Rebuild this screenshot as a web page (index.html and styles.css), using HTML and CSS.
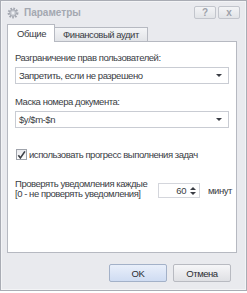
FILE: index.html
```html
<!DOCTYPE html>
<html lang="ru">
<head>
  <meta charset="UTF-8" />
  <title>Параметры</title>
  <link rel="stylesheet" href="styles.css">
</head>
<body>

  <div class="window">
    <div class="titlebar">
      <svg class="title-icon" width="12" height="12" viewBox="0 0 12 12">
        <circle cx="6" cy="6" r="4.2" fill="none" stroke="#a3a7b0" stroke-width="2.4" stroke-dasharray="1.6 1.2"/>
        <circle cx="6" cy="6" r="3.3" fill="#c9ccd3" stroke="#9ea2ab" stroke-width="0.8"/>
        <circle cx="6" cy="6" r="1.4" fill="#eceef2"/>
      </svg>
      <span class="title">Параметры</span>
      <div class="title-buttons">
        <button class="tbtn">?</button>
        <button class="tbtn">x</button>
      </div>
    </div>

    <div class="tabs">
      <div class="tab active">Общие</div>
      <div class="tab">Финансовый аудит</div>
    </div>

    <div class="panel">
      <div class="field-label">Разграничение прав пользователей:</div>
      <div class="combo">
        <span>Запретить, если не разрешено</span>
        <span class="arrow"></span>
      </div>

      <div class="field-label second">Маска номера документа:</div>
      <div class="combo">
        <span>$y/$m-$n</span>
        <span class="arrow"></span>
      </div>

      <div class="check-row">
        <span class="checkbox">
          <svg width="10" height="10" viewBox="0 0 10 10">
            <path d="M1.5 5.2 L3.8 8.3 L8.8 1" fill="none" stroke="#3c3f46" stroke-width="1.8"/>
          </svg>
        </span>
        <span>использовать прогресс выполнения задач</span>
      </div>

      <div class="notify-row">
        <div class="notify-text">
          <div>Проверять уведомления каждые</div>
          <div>[0 - не проверять уведомления]</div>
        </div>
        <div class="spin">
          <span class="spin-value">60</span>
          <span class="spin-arrows">
            <span class="up"></span>
            <span class="down"></span>
          </span>
        </div>
        <span class="unit">минут</span>
      </div>
    </div>

    <div class="footer">
      <button class="btn ok">OK</button>
      <button class="btn">Отмена</button>
    </div>
  </div>

</body>
</html>
```

FILE: styles.css
```css
body {
  margin: 0;
  background: #ffffff;
  font-family: 'Liberation Sans', Arial, sans-serif;
  font-size: 9.5px;
  letter-spacing: -0.45px;
  color: #3a3d44;
  white-space: nowrap;
}

.window {
  width: 245px;
  height: 289px;
  border: 1px solid #a9acb4;
  background: #e9eaee;
  box-shadow: inset 0 0 0 1px #f3f4f6;
  display: flex;
  flex-direction: column;
}

.titlebar {
  height: 23px;
  display: flex;
  align-items: center;
  padding: 0 6px 0 6px;
}

.title-icon {
  margin-right: 5px;
}

.title {
  font-weight: bold;
  font-size: 10px;
  letter-spacing: 0;
  color: #a4a8b1;
  flex: 1;
}

.title-buttons {
  display: flex;
  gap: 2px;
}

.tbtn {
  width: 22px;
  height: 13px;
  padding: 0;
  border: 1px solid #c2c5cc;
  border-radius: 2px;
  background: linear-gradient(#f3f4f6, #e1e3e7);
  color: #9ea2aa;
  font-family: 'Liberation Sans', Arial, sans-serif;
  font-size: 10px;
  font-weight: bold;
  line-height: 11px;
}

.tabs {
  display: flex;
  align-items: flex-end;
  padding-left: 6px;
  height: 17px;
}

.tab {
  height: 13px;
  padding: 0 8px 0 8px;
  border: 1px solid #b6b9c1;
  border-bottom: none;
  background: linear-gradient(#f4f5f7, #e2e4e8);
  line-height: 13px;
  margin-left: -1px;
}

.tab.active {
  height: 17px;
  line-height: 17px;
  background: #ffffff;
  margin-left: 0;
  margin-bottom: -1px;
  position: relative;
  padding: 0 8px 0 9px;
}

.panel {
  margin: 0 9px 0 6px;
  height: 212px;
  background: #ffffff;
  border: 1px solid #b6b9c1;
  padding: 9px 7px 0 7px;
  box-sizing: border-box;
}

.field-label {
  line-height: 13px;
}

.field-label.second {
  margin-top: 11px;
}

.combo {
  margin-top: 3px;
  height: 15px;
  border: 1px solid #c9ccd3;
  display: flex;
  align-items: center;
  justify-content: space-between;
  padding: 0 6px 0 3px;
}

.arrow {
  width: 0;
  height: 0;
  border-left: 3px solid transparent;
  border-right: 3px solid transparent;
  border-top: 3px solid #3a3d44;
}

.check-row {
  display: flex;
  align-items: center;
  margin-top: 21px;
  padding-left: 1px;
}

.checkbox {
  width: 9px;
  height: 9px;
  border: 1px solid #9fa3ab;
  background: linear-gradient(#e9eaee, #ffffff);
  margin-right: 2px;
  display: flex;
  align-items: center;
  justify-content: center;
}

.notify-row {
  display: flex;
  align-items: center;
  margin-top: 19px;
}

.notify-text {
  flex: none;
  line-height: 10px;
  width: 143px;
  color: #3a3d44;
}

.spin {
  flex: none;
  width: 40px;
  height: 13px;
  border: 1px solid #d4d6dc;
  display: flex;
  align-items: center;
  justify-content: flex-end;
  margin: 3px 8px 0 0;
}

.spin-value {
  margin-right: 4px;
}

.spin-arrows {
  display: flex;
  flex-direction: column;
  gap: 2px;
  margin-right: 3px;
}

.spin-arrows .up {
  border-left: 3px solid transparent;
  border-right: 3px solid transparent;
  border-bottom: 3px solid #3a3d44;
}

.spin-arrows .down {
  border-left: 3px solid transparent;
  border-right: 3px solid transparent;
  border-top: 3px solid #3a3d44;
}

.unit {
  margin-top: 3px;
}

.footer {
  display: flex;
  justify-content: flex-end;
  gap: 6px;
  padding: 11px 15px 0 0;
}

.btn {
  width: 58px;
  height: 18px;
  padding: 0;
  border: 1px solid #b8bac1;
  border-radius: 2px;
  background: linear-gradient(#f6f6f8, #dfe0e4);
  font-family: 'Liberation Sans', Arial, sans-serif;
  font-size: 9.5px;
  letter-spacing: -0.45px;
  color: #2a2d33;
}

.btn.ok {
  border-color: #a3b1c8;
  background: linear-gradient(#e9effa, #cfdcf2);
}
```
